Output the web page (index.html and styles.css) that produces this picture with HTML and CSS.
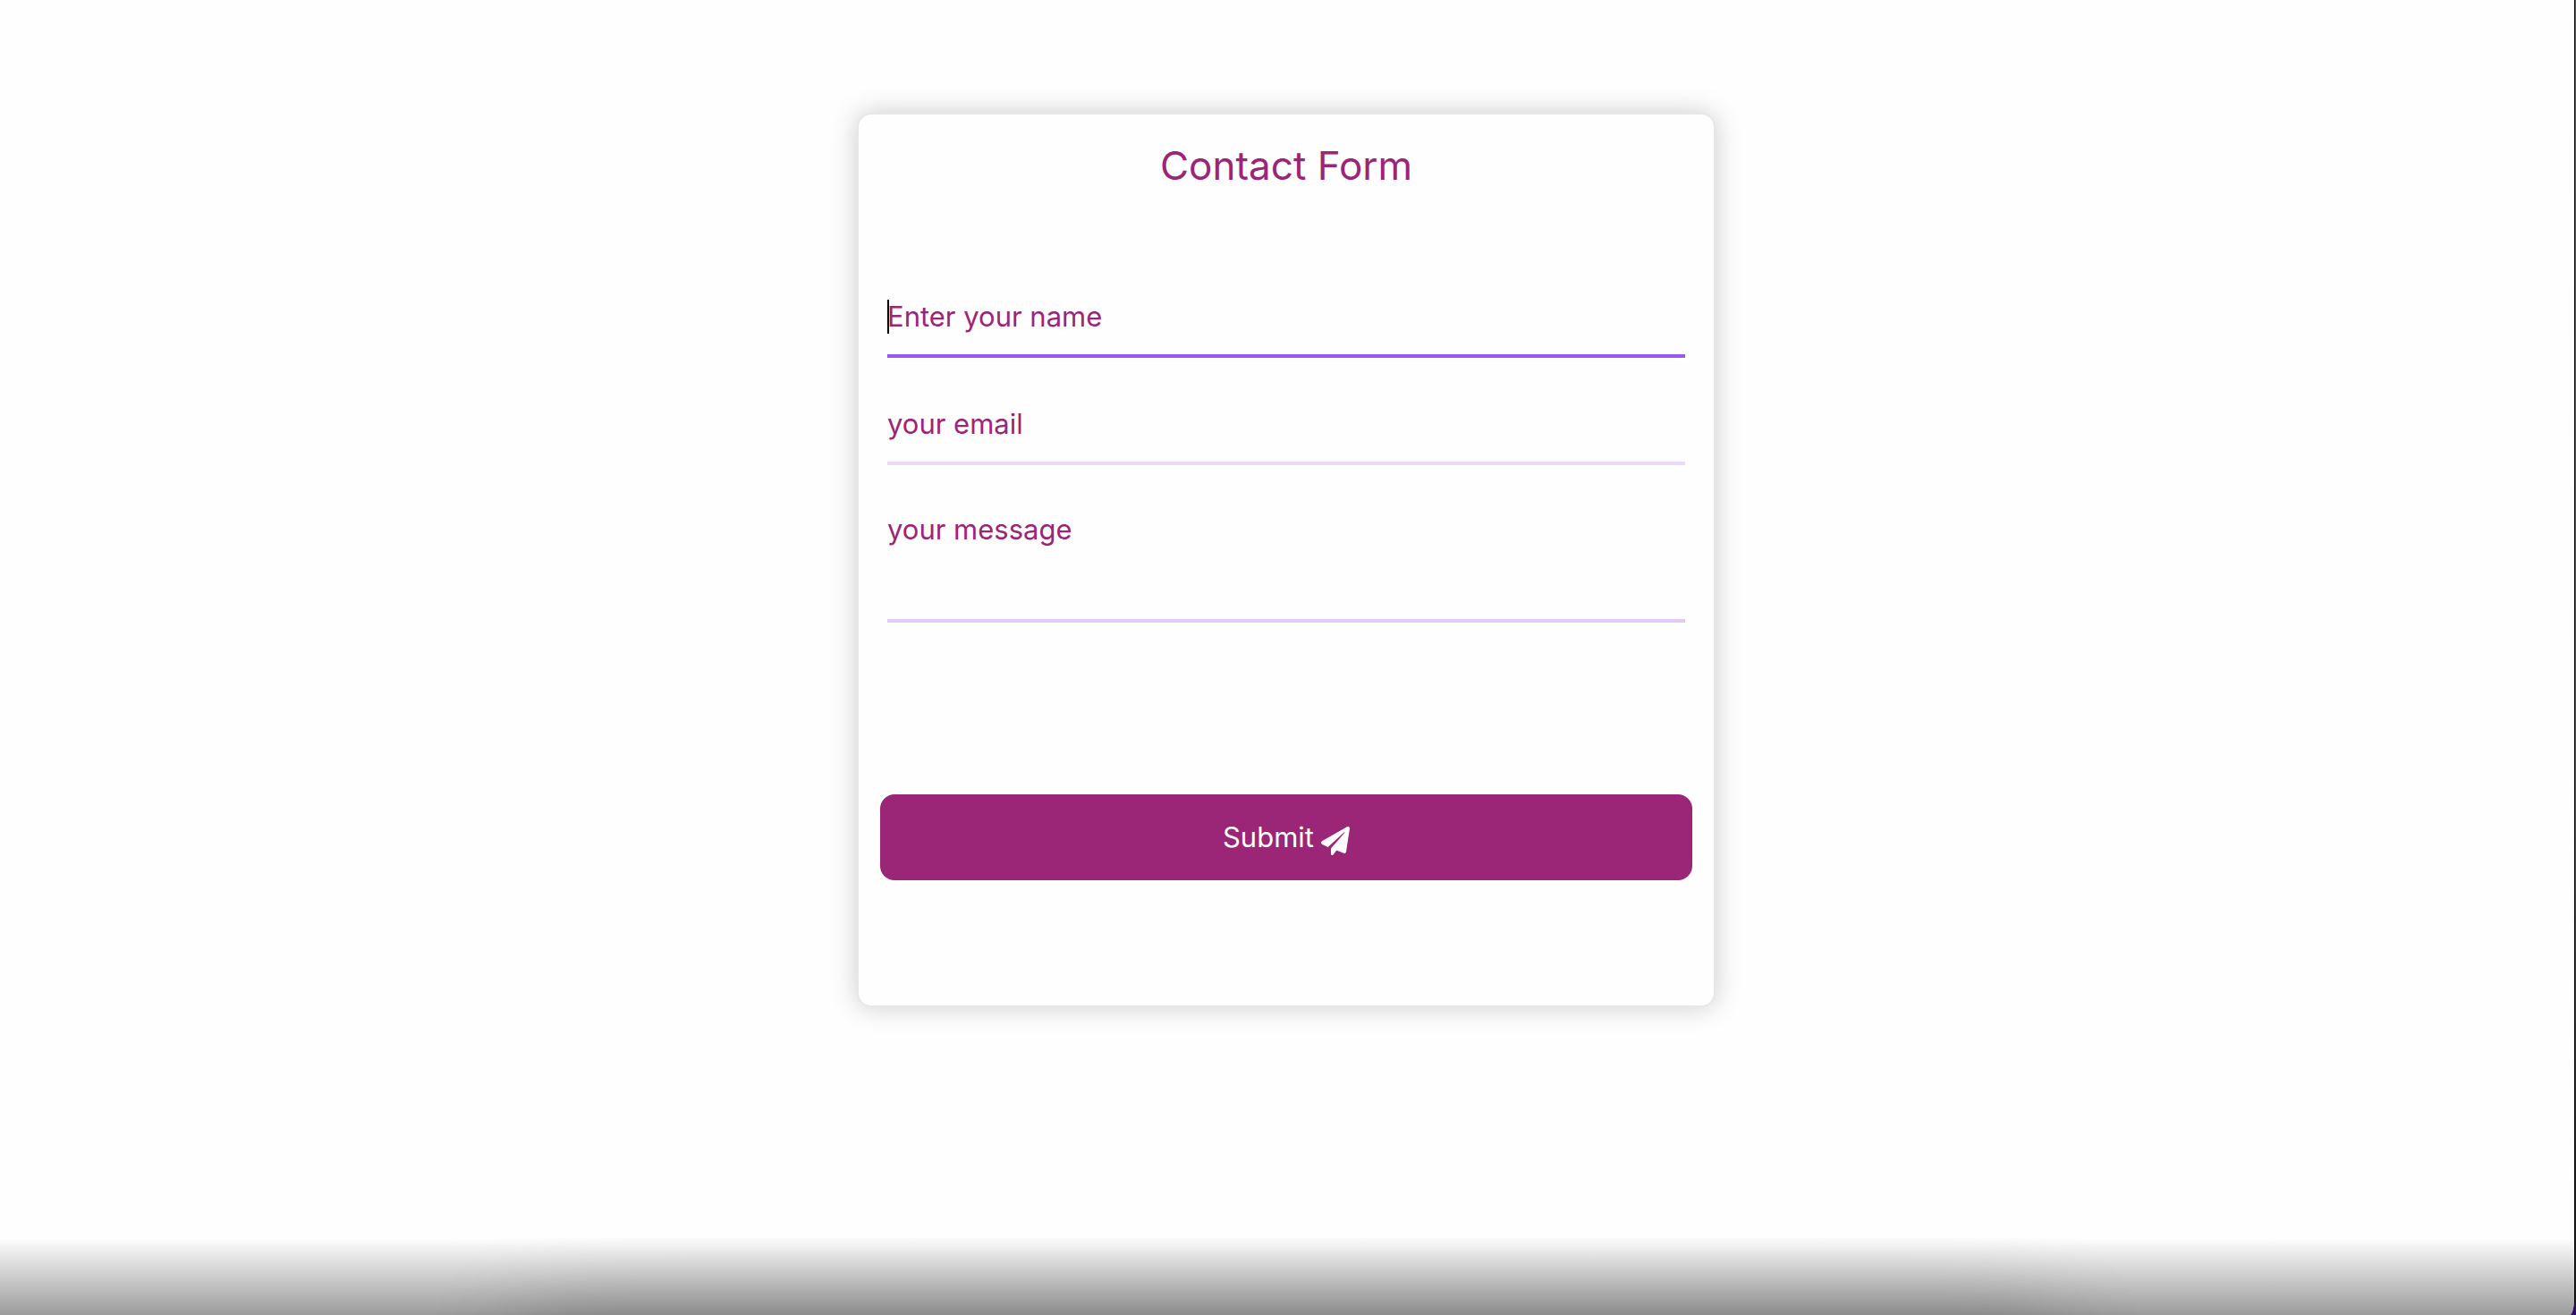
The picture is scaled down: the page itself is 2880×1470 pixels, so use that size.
FILE: index.html
```html
<!DOCTYPE html>
<html lang="en">
<head>
  <meta charset="utf-8">
  <title>Contact Form</title>
  <link rel="stylesheet" href="styles.css">
</head>
<body>
  <main class="page">
    <form class="card">
      <h1 class="title">Contact Form</h1>
      <div class="fields">
        <div class="field">
          <input class="control control-active" type="text" name="name" placeholder="Enter your name" aria-label="Enter your name">
          <span class="caret"></span>
        </div>
        <div class="field">
          <input class="control" type="email" name="email" placeholder="your email" aria-label="your email">
        </div>
        <div class="field">
          <textarea class="control control-message" name="message" placeholder="your message" aria-label="your message"></textarea>
        </div>
      </div>
      <button class="submit" type="submit">
        Submit
        <svg class="icon" viewBox="0 0 512 512" aria-hidden="true"><path fill="currentColor" d="M498.100 5.600c10.100 7 15.400 19.100 13.500 31.200l-64 416c-1.500 9.700-7.400 18.200-16 23s-18.900 5.400-28 1.600L277 425.200l-60.500 77.500c-8 9-17.900 10.900-26.200 8.100S176 493.200 176 480v-78c0-9 2-14 6-19L420 110c6-8-3-14-10-8L122 366 17.700 316.600C7.100 311.300.3 300.700 0 288.900s5.900-22.800 16.100-28.700l448-256c10.700-6.100 23.900-5.500 34 1.400z"/></svg>
      </button>
    </form>
    <div class="dock-shade"></div>
  </main>
</body>
</html>
```
FILE: styles.css
```css
* {
  box-sizing: border-box;
}

body {
  margin: 0;
  background: linear-gradient(#8a4a80, #7a3a80 60%, #2e0a78 90%);
  font-family: Inter, "Liberation Sans", sans-serif;
}

.page {
  position: relative;
  min-height: 100vh;
  margin-right: 1px;
  padding: 126px 2px 0 0;
  overflow: hidden;
  background: #fefefe;
  border-right: 1px solid #000;
  border-radius: 0 0 6px 0 / 0 0 16px 0;
}

.card {
  display: flex;
  flex-direction: column;
  max-width: 960px;
  margin: 0 auto;
  padding: 24px 24px 140px;
  background: #fefefe;
  border: 2px solid #e5e7eb;
  border-radius: 16px;
  box-shadow: 0 0 30px rgba(0, 0, 0, 0.2);
}

.title {
  margin: 0;
  color: #9b2577;
  font-size: 44px;
  font-weight: 400;
  line-height: 66px;
  text-align: center;
}

.fields {
  display: flex;
  flex-direction: column;
  gap: 40px;
  padding: 102px 8px 192px;
}

.field {
  position: relative;
  display: flex;
}

.control {
  width: 100%;
  height: 80px;
  padding: 0 0 10px;
  border: 0;
  border-bottom: 4px solid #e9d9fb;
  border-radius: 0;
  outline: 0;
  background: transparent;
  color: #9b2577;
  font: inherit;
  font-size: 31px;
  line-height: 40px;
}

.control::placeholder {
  color: #9b2577;
  opacity: 1;
}

.control-active {
  border-color: #9b57f0;
}

.control-message {
  height: 136px;
  padding-top: 12px;
  border-color: #dfcaf8;
  resize: none;
}

.caret {
  position: absolute;
  top: 15px;
  left: 0;
  width: 2px;
  height: 38px;
  background: #000;
}

.submit {
  display: flex;
  align-items: center;
  justify-content: center;
  gap: 8px;
  height: 96px;
  padding: 0 0 2px;
  border: 0;
  border-radius: 16px;
  background: #9b2577;
  color: #fff;
  font: inherit;
  font-size: 31px;
}

.icon {
  width: 32px;
  height: 32px;
  margin-top: 10px;
}

.dock-shade {
  position: absolute;
  right: 0;
  bottom: 0;
  left: 0;
  height: 86px;
  overflow: hidden;
  background: linear-gradient(rgba(0, 0, 0, 0), rgba(0, 0, 0, 0.39));
}

.dock-shade::after {
  content: "";
  position: absolute;
  top: 100%;
  right: 20%;
  left: 20%;
  height: 100px;
  border-radius: 50px;
  box-shadow: 0 0 110px rgba(0, 0, 0, 0.22);
}
```
